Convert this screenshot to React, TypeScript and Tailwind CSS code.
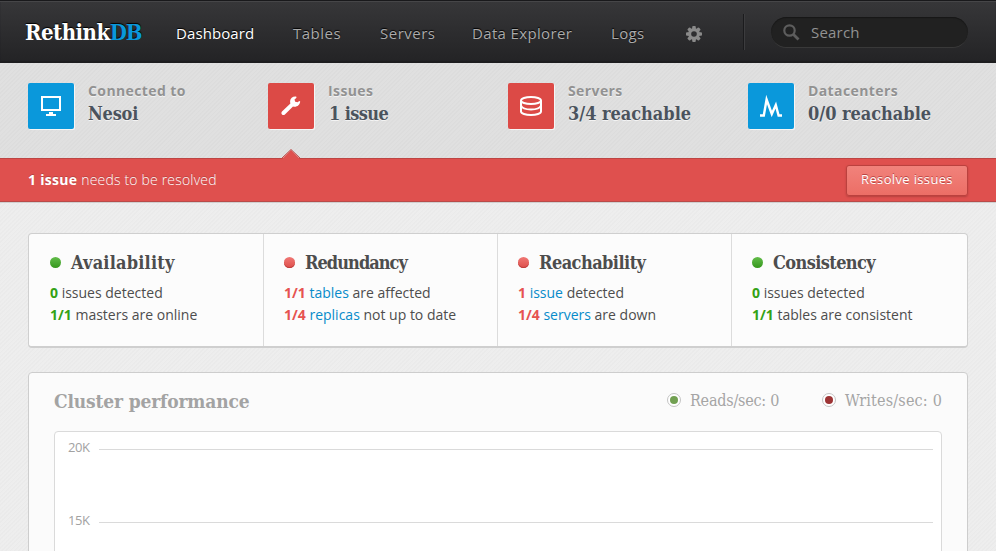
import React from "react";

const slab = "font-['DejaVu_Serif_Condensed','DejaVu_Serif',serif] [font-stretch:condensed]";
const texture =
  "bg-[repeating-linear-gradient(135deg,rgba(0,0,0,0.01)_0px,rgba(0,0,0,0.01)_1px,rgba(255,255,255,0.04)_1.5px,rgba(255,255,255,0.04)_3px)]";

const nav = [
  { label: "Dashboard", box: "w-[117px] text-white tracking-[0.1px]" },
  { label: "Tables", box: "w-[87px] text-[#aaa] tracking-[0.5px]" },
  { label: "Servers", box: "w-[92px] text-[#aaa] tracking-[0.5px]" },
  { label: "Data Explorer", box: "w-[139px] text-[#aaa] tracking-[0.35px]" },
  { label: "Logs", box: "w-[75px] text-[#aaa] tracking-[0.3px]" },
];

function GearIcon() {
  return (
    <svg width="16" height="16" viewBox="0 0 16 16" fill="#8a8a8a">
      {[0, 45, 90, 135].map((a) => (
        <rect key={a} x="6.2" y="0" width="3.600" height="16" rx="1" transform={`rotate(${a} 8 8)`} />
      ))}
      <circle cx="8" cy="8" r="5.900" />
      <circle cx="8" cy="8" r="2.800" fill="#2e2e30" />
    </svg>
  );
}

function MonitorIcon() {
  return (
    <svg width="20" height="20" viewBox="0 0 20 20">
      <rect x="1" y="1" width="18" height="13" fill="none" stroke="#fff" strokeWidth="2" />
      <path d="M8 16h4v2h3v2H5v-2h3z" fill="#fff" />
    </svg>
  );
}

function WrenchIcon() {
  return (
    <svg width="20" height="20" viewBox="0 0 20 20">
      <path
        d="M15.2 0.500 C12 0 9.300 2.200 9.100 5 C9 6 9.200 6.800 9.400 7.500 L1 15.400 C0.200 16.300 0.200 17.600 1 18.400 C1.800 19.200 3 19.200 3.900 18.400 L12 10.400 C15.500 11.400 19 9 19.200 5.400 L18.300 5 L16.600 6.300 L14.200 5.800 L13.500 3.500 L15.500 1.800 Z"
        fill="#fff"
      />
    </svg>
  );
}

function DatabaseIcon() {
  return (
    <svg width="22" height="20" viewBox="0 0 22 20" fill="none" stroke="#fff" strokeWidth="2">
      <ellipse cx="11" cy="4.500" rx="10" ry="3.500" />
      <path d="M1 4.500v11c0 2 4.500 3.500 10 3.500s10-1.500 10-3.500v-11" />
      <path d="M1 9.500c1 2.500 5 4 10 4s9-1.500 10-4" />
    </svg>
  );
}

function PeaksIcon() {
  return (
    <svg width="22" height="22" viewBox="0 0 22 22">
      <path d="M0 20.500h3.800L6.600 4.500l5.200 14.500L15.800 10l2.800 10.500H22" fill="none" stroke="#fff" strokeWidth="2.400" strokeMiterlimit="8" />
    </svg>
  );
}

const stats = [
  { label: "Connected to", value: "Nesoi", color: "bg-[#0a98db]", icon: <MonitorIcon />, vt: "tracking-[-0.2px]" },
  { label: "Issues", value: "1 issue", color: "bg-[#dc4a46]", icon: <WrenchIcon />, vt: "tracking-[-0.6px] pl-px" },
  { label: "Servers", value: "3/4 reachable", color: "bg-[#dc4a46]", icon: <DatabaseIcon />, vt: "tracking-[-0.02px]" },
  { label: "Datacenters", value: "0/0 reachable", color: "bg-[#0a98db]", icon: <PeaksIcon />, vt: "tracking-[-0.02px]" },
];

type Line = { count: string; link?: string; text: string };
const checks: { title: string; tracking: string; ok: boolean; lines: Line[] }[] = [
  { title: "Availability", tracking: "tracking-[0.2px]", ok: true, lines: [{ count: "0", text: "issues detected" }, { count: "1/1", text: "masters are online" }] },
  { title: "Redundancy", tracking: "tracking-[-0.95px]", ok: false, lines: [{ count: "1/1", link: "tables", text: "are affected" }, { count: "1/4", link: "replicas", text: "not up to date" }] },
  { title: "Reachability", tracking: "tracking-[-0.55px]", ok: false, lines: [{ count: "1", link: "issue", text: "detected" }, { count: "1/4", link: "servers", text: "are down" }] },
  { title: "Consistency", tracking: "tracking-[-0.6px]", ok: true, lines: [{ count: "0", text: "issues detected" }, { count: "1/1", text: "tables are consistent" }] },
];

function Legend({ color, label, tracking }: { color: string; label: string; tracking: string }) {
  return (
    <div className="flex items-center">
      <span className="mb-[2px] flex size-[14px] items-center justify-center rounded-full border border-[#c4c4c4] bg-white">
        <span className={`size-2 rounded-full ${color}`} />
      </span>
      <span className={`ml-[9px] text-[16px] leading-5 text-[#a5a5a5] ${tracking} ${slab}`}>{label}</span>
    </div>
  );
}

export default function App() {
  return (
    <div className={`flex h-[551px] w-[996px] flex-col overflow-hidden bg-[#ededed] font-['Open_Sans',sans-serif] whitespace-nowrap ${texture}`}>
      <header className="flex h-[63px] shrink-0 items-start border-t border-[#19191b] bg-linear-to-b from-[#373739] to-[#232325] shadow-[inset_0_1px_0_#464648,inset_0_-2px_1px_#1d1d1f]">
        <h1 className={`ml-[25px] mt-[15px] w-[151px] text-[22px] font-bold leading-8 tracking-[-0.5px] text-white [text-shadow:0_-1px_1px_#000] ${slab}`}>
          Rethink<span className="tracking-[-1.1px] text-[#0a98db]">DB</span>
        </h1>
        <nav className="mt-[20px] flex text-[15px] leading-6 [text-shadow:0_-1px_1px_#000]">
          {nav.map((n) => (
            <a key={n.label} className={n.box}>{n.label}</a>
          ))}
        </nav>
        <div className="mt-[25px] w-[57px]"><GearIcon /></div>
        <div className="mt-[13px] h-9 w-[2px] border-l border-r border-l-[#1b1b1d] border-r-[#3c3c3e]" />
        <div className="ml-[26px] mt-4 flex h-[31px] w-[197px] items-center rounded-full border-b border-[#393939] bg-[#212121] pl-3 shadow-[inset_0_1px_1px_#171717]">
          <svg width="17" height="17" viewBox="0 0 17 17" fill="none" stroke="#5d5d5d">
            <circle cx="6.500" cy="6.500" r="5.200" strokeWidth="2.200" />
            <path d="M10.500 10.500l5 5" strokeWidth="2.800" />
          </svg>
          <span className="ml-[11px] text-[15px] tracking-[0.2px] text-[#929292]">Search</span>
        </div>
      </header>

      <section className={`flex h-[95px] shrink-0 bg-[#dfdfdf] pl-7 pt-5 ${texture}`}>
        {stats.map((s) => (
          <div key={s.label} className="flex w-[240px]">
            <div className={`flex size-[46px] items-center justify-center rounded-[2px] shadow-[1px_1px_0_#f6f6f6] ${s.color}`}>{s.icon}</div>
            <div className="ml-[14px] [text-shadow:0_1px_0_#f3f3f3]">
              <div className="-mt-[2px] text-[14px] font-bold leading-5 tracking-[0.4px] text-[#929292]">{s.label}</div>
              <div className={`mt-px text-[18px] font-bold leading-6 text-[#4b535d] ${s.vt} ${slab}`}>{s.value}</div>
            </div>
          </div>
        ))}
      </section>

      <section className="relative flex h-[44px] shrink-0 items-center justify-between border-b border-t border-b-[#b94b49] border-t-[#bd4543] bg-[#df504e] pl-7 pr-7 text-white shadow-[0_1px_0_#d0d0d0]">
        <svg className="absolute left-[281px] top-[-10px]" width="20" height="11" viewBox="0 0 20 11">
          <path d="M0 11L10 1l10 10z" fill="#df504e" />
          <path d="M0 10L10 0.500l10 9.500" fill="none" stroke="#bd4543" />
        </svg>
        <p className="text-[14px] font-light leading-5 tracking-[0.18px] [text-shadow:0_-1px_0_#b74442]"><b className="font-bold tracking-[0.3px]">1 issue</b> needs to be resolved</p>
        <button className="h-[31px] w-[122px] rounded-[3px] border border-[#bb413e] bg-linear-to-b from-[#f1827b] to-[#ec6e66] text-[13px] tracking-[0.35px] shadow-[0_1px_2px_#b5403d] [text-shadow:0_-1px_0_#b74442]">
          Resolve issues
        </button>
      </section>

      <section className="mx-7 mt-[31px] flex h-[115px] shrink-0 rounded-[4px] border border-b-2 border-[#cfcfcf] bg-[#fcfcfc] pl-px">
        {checks.map((c, i) => (
          <div key={c.title} className={`w-[234px] pl-5 pt-[17px] ${i < 3 ? "border-r border-[#dcdcdc]" : ""}`}>
            <div className="flex items-center">
              <span className={`mb-[2px] size-[11px] rounded-full ${c.ok ? "bg-linear-to-b from-[#62bd49] to-[#35971b]" : "bg-linear-to-b from-[#f07774] to-[#de4e4b] shadow-[inset_0_-1px_0_#bd3d3b]"}`} />
              <h2 className={`ml-[10px] text-[18px] font-bold leading-6 text-[#4d4d4d] ${c.tracking} ${slab}`}>{c.title}</h2>
            </div>
            <div className="mt-[7px] text-[14px] leading-[22px] text-[#4d4d4d]">
              {c.lines.map((l) => (
                <p key={l.count}>
                  <b className={c.ok ? "text-[#34a215]" : "text-[#e65351]"}>{l.count}</b>{" "}
                  {l.link && <a className="text-[#078bca]">{l.link} </a>}
                  {l.text}
                </p>
              ))}
            </div>
          </div>
        ))}
      </section>

      <section className="mx-7 mt-[24px] h-[300px] shrink-0 rounded-[4px] border border-[#cdcdcd] bg-[#fbfbfb] px-[25px]">
        <div className="flex h-[58px] items-center pb-[3px]">
          <h2 className={`flex-1 text-[19px] font-bold leading-7 tracking-[-0.15px] text-[#a3a3a3] ${slab}`}>Cluster performance</h2>
          <div className="w-[155px]"><Legend color="bg-[#72a052]" label="Reads/sec: 0" tracking="tracking-[-0.22px]" /></div>
          <div className="w-[120px]"><Legend color="bg-[#9d3435]" label="Writes/sec: 0" tracking="tracking-[0.18px]" /></div>
        </div>
        <div className="h-[240px] rounded-[4px] border border-[#dadada] bg-white pl-[13px] pr-2 pt-[7px] text-[13px] text-[#a2a2a2]">
          {["20K", "15K"].map((t) => (
            <div key={t} className="flex h-[73px] items-start">
              <span className="-mt-px w-[31px] leading-[18px] tracking-[-0.4px]">{t}</span>
              <span className="mt-[10px] h-px flex-1 bg-[#dadada]" />
            </div>
          ))}
        </div>
      </section>
    </div>
  );
}
